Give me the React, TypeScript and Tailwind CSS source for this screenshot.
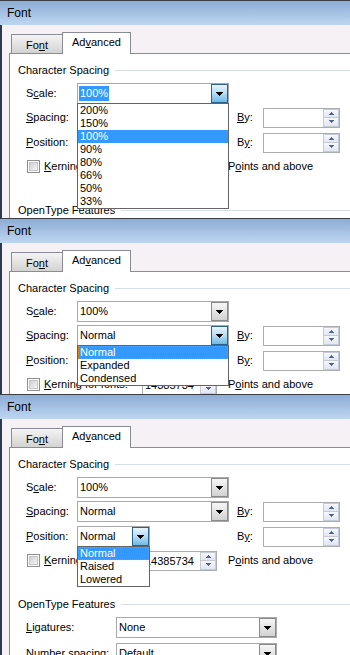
import React from 'react';

type Mode = 1 | 2 | 3;

function DropArrow() {
  return (
    <svg width="7" height="4" viewBox="0 0 7 4" shapeRendering="crispEdges">
      <path d="M0 0H7V1H6V2H5V3H4V4H3V3H2V2H1V1H0Z" fill="#000" />
    </svg>
  );
}

function SpinUp() {
  return (
    <svg width="5" height="3" viewBox="0 0 5 3" shapeRendering="crispEdges">
      <path d="M2 0H3V1H4V2H5V3H0V2H1V1H2Z" fill="#4d64a8" />
    </svg>
  );
}

function SpinDown() {
  return (
    <svg width="5" height="3" viewBox="0 0 5 3" shapeRendering="crispEdges">
      <path d="M0 0H5V1H4V2H3V3H2V2H1V1H0Z" fill="#4d64a8" />
    </svg>
  );
}

function Combo({
  value,
  width,
  hot,
  selectedText,
  items,
  current,
  focusRect,
}: {
  value: string;
  width: string;
  hot?: boolean;
  selectedText?: boolean;
  items?: string[];
  current?: string;
  focusRect?: boolean;
}) {
  return (
    <div className={`relative flex h-[21px] shrink-0 border border-[#a9a9a9] bg-white ${width}`}>
      <div className="flex flex-1 items-center overflow-hidden whitespace-nowrap pl-[2px]">
        {selectedText ? (
          <span className="-ml-px bg-[#3399ff] px-px leading-[15px] text-white">{value}</span>
        ) : (
          <span>{value}</span>
        )}
      </div>
      {hot ? (
        <div className="flex w-[17px] items-center justify-center border border-[#2c628b] bg-linear-to-b from-[#e6f5fd] via-[#b4dcf5] to-[#6fb9e6]">
          <DropArrow />
        </div>
      ) : (
        <div className="flex w-[17px] items-center justify-center border border-[#8a8a8a] bg-linear-to-b from-[#f6f6f6] to-[#d2d2d2]">
          <DropArrow />
        </div>
      )}

      {/* open list */}
      {items && (
        <div className="absolute -left-px -right-px top-[19px] z-20 border border-[#646464] bg-white">
          {items.map((it) => (
            <div
              key={it}
              className={
                it === current
                  ? `h-[13px] bg-[#3399ff] pl-[2px] leading-[13px] text-white ${focusRect ? 'outline-1 -outline-offset-1 outline-[#e8861c] outline-dotted' : ''}`
                  : 'h-[13px] pl-[2px] leading-[13px]'
              }
            >
              {it}
            </div>
          ))}
        </div>
      )}
    </div>
  );
}

function Spin({ width, value }: { width: string; value?: string }) {
  return (
    <div className={`flex h-[20px] shrink-0 border border-[#abadb3] bg-white ${width}`}>
      <div className="flex-1 overflow-hidden whitespace-nowrap pl-[2px] leading-[18px]">{value}</div>
      <div className="flex w-[16px] flex-col">
        <div className="flex flex-1 items-center justify-center border border-[#c5cad6] bg-linear-to-b from-[#f7f8fc] to-[#e2e6f0]">
          <SpinUp />
        </div>
        <div className="flex flex-1 items-center justify-center border border-t-0 border-[#c5cad6] bg-linear-to-b from-[#f7f8fc] to-[#e2e6f0]">
          <SpinDown />
        </div>
      </div>
    </div>
  );
}

function Checkbox() {
  return (
    <div className="flex h-[13px] w-[13px] shrink-0 items-center justify-center border border-[#8f8f8f] bg-white">
      <div className="h-[9px] w-[9px] border border-[#c6c6c6] bg-linear-to-br from-[#cdd0d5] to-[#f5f5f5]" />
    </div>
  );
}

function GroupHeader({ label, top }: { label: string; top: string }) {
  return (
    <div className={`flex h-[13px] shrink-0 items-center pl-[8px] ${top}`}>
      <span className="whitespace-nowrap">{label}</span>
      <div className="ml-[6px] h-px flex-1 bg-[#d5dfe5]" />
    </div>
  );
}

function Dialog({ mode, height }: { mode: Mode; height: string }) {
  return (
    <div className={`flex flex-col overflow-hidden ${height}`}>
      {/* title bar */}
      <div className="h-[25px] shrink-0 border-t border-[#3a3f47] bg-linear-to-b from-[#8dadd6] to-[#bed6f0] pl-[7px] text-[12px] leading-[25px]">
        Font
      </div>

      <div className="flex flex-1 flex-col border-l-2 border-[#2a3a52] bg-[#f5f1f5] pl-[7px]">
        {/* tabs */}
        <div className="flex h-[28px] shrink-0 items-end pl-[2px]">
          <div className="h-[19px] w-[52px] border border-b-0 border-[#898c95] bg-linear-to-b from-[#f4f4f4] to-[#d3d3d3] pt-[2px] text-center leading-[16px]">
            Fo<u>n</u>t
          </div>
          <div className="relative z-10 -mb-px -ml-px h-[22px] w-[69px] border border-b-0 border-[#898c95] bg-white pt-[1px] text-center leading-[17px]">
            Ad<u>v</u>anced
          </div>
        </div>

        {/* page */}
        <div className="flex flex-1 flex-col border-l border-t border-[#898c95] bg-white">
          <GroupHeader label="Character Spacing" top="mt-[10px]" />

          <div className="mt-[6px] flex h-[21px] shrink-0 items-center pl-[16px]">
            <div className="w-[51px]">
              S<u>c</u>ale:
            </div>
            <Combo
              value="100%"
              width="w-[152px]"
              hot={mode === 1}
              selectedText={mode === 1}
              items={mode === 1 ? ['200%', '150%', '100%', '90%', '80%', '66%', '50%', '33%'] : undefined}
              current="100%"
            />
          </div>

          <div className="mt-[3px] flex h-[21px] shrink-0 items-center pl-[16px]">
            <div className="w-[51px]">
              <u>S</u>pacing:
            </div>
            <Combo
              value="Normal"
              width="w-[152px]"
              hot={mode === 2}
              items={mode === 2 ? ['Normal', 'Expanded', 'Condensed'] : undefined}
              current="Normal"
              focusRect
            />
            <div className="ml-[8px] w-[26px]">
              <u>B</u>y:
            </div>
            <Spin width="w-[77px]" />
          </div>

          <div className="mt-[4px] flex h-[21px] shrink-0 items-center pl-[16px]">
            <div className="w-[51px]">
              <u>P</u>osition:
            </div>
            <div className="w-[152px]">
              <Combo
                value="Normal"
                width="w-[73px]"
                hot={mode === 3}
                items={mode === 3 ? ['Normal', 'Raised', 'Lowered'] : undefined}
                current="Normal"
                focusRect
              />
            </div>
            <div className="ml-[8px] w-[26px]">
              B<u>y</u>:
            </div>
            <Spin width="w-[77px]" />
          </div>

          <div className="mt-[3px] flex h-[21px] shrink-0 items-center pl-[17px]">
            <div className="flex w-[115px] items-center">
              <Checkbox />
              <span className="ml-[4px] whitespace-nowrap">
                <u>K</u>erning for fonts:
              </span>
            </div>
            <Spin width="w-[75px]" value="14385734" />
            <span className="ml-[11px] whitespace-nowrap">
              P<u>o</u>ints and above
            </span>
          </div>

          <GroupHeader label="OpenType Features" top="mt-[27px]" />

          <div className="mt-[6px] flex h-[21px] shrink-0 items-center pl-[16px]">
            <div className="w-[90px]">
              <u>L</u>igatures:
            </div>
            <Combo value="None" width="w-[161px]" />
          </div>

          <div className="mt-[5px] flex h-[21px] shrink-0 items-center pl-[16px]">
            <div className="w-[90px]">
              N<u>u</u>mber spacing:
            </div>
            <Combo value="Default" width="w-[161px]" />
          </div>
        </div>
      </div>
    </div>
  );
}

export default function App() {
  return (
    <div className="flex h-[655px] w-[350px] flex-col overflow-hidden bg-white font-['Liberation_Sans',Arial,sans-serif] text-[11px] text-black">
      <Dialog mode={1} height="h-[218px] shrink-0" />
      <Dialog mode={2} height="h-[176px] shrink-0" />
      <Dialog mode={3} height="h-[261px] shrink-0" />
    </div>
  );
}
